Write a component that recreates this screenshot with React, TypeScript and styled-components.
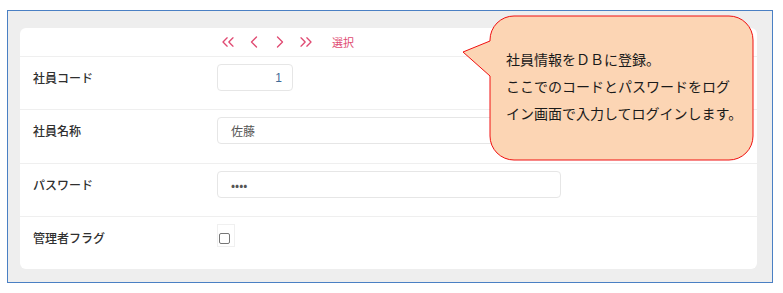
import React from 'react'
import styled, { createGlobalStyle } from 'styled-components'
import { ChevronsLeft, ChevronLeft, ChevronRight, ChevronsRight } from 'lucide-react'

const Global = createGlobalStyle`
body {
  margin: 0;
  background: #fff;
  font-family: "Noto Sans CJK JP", "Noto Sans", sans-serif;
}
`

const Page = styled.div`
position: relative;
width: 783px;
height: 293px;
padding: 10px 0 0 7px;
box-sizing: border-box;
`

const Frame = styled.div`
width: 766px;
height: 273px;
box-sizing: border-box;
border: 1px solid #4a80c4;
background: #eeeeee;
padding: 17px 15px 13px 12px;
`

const Card = styled.div`
background: #fff;
border-radius: 6px;
height: 100%;
display: flex;
flex-direction: column;
`

const Nav = styled.div`
height: 29px;
flex-shrink: 0;
box-sizing: border-box;
border-bottom: 1px solid #efefef;
display: flex;
align-items: center;
padding-left: 198px;
gap: 6px;
color: #e04a72;
`

const NavText = styled.span`
font-size: 11px;
margin-left: 10px;
`

const Row = styled.div<{ $h: number; $last?: boolean }>`
height: ${p => p.$h}px;
flex-shrink: 0;
box-sizing: border-box;
border-bottom: ${p => (p.$last ? 'none' : '1px solid #efefef')};
display: flex;
align-items: flex-start;
padding: 7px 0 0 13px;
`

const Label = styled.div`
width: 184px;
height: 27px;
display: flex;
align-items: center;
font-size: 12px;
font-weight: 500;
color: #2f2f2f;
`

const Input = styled.div<{ $w: number; $right?: boolean }>`
width: ${p => p.$w}px;
height: 27px;
box-sizing: border-box;
border: 1px solid #e6e6e6;
border-radius: 4px;
display: flex;
align-items: center;
justify-content: ${p => (p.$right ? 'flex-end' : 'flex-start')};
padding: 0 10px 0 13px;
font-size: 12px;
color: #555;
`

const Num = styled.span`
color: #3f6a96;
font-family: "Liberation Sans", sans-serif;
`

const CheckWrap = styled.div`
width: 18px;
height: 23px;
box-sizing: border-box;
border: 1px solid #f0f0f0;
display: flex;
align-items: flex-end;
padding: 0 0 2px 1px;
`

const Check = styled.span`
width: 11px;
height: 11px;
box-sizing: border-box;
border: 1px solid #767676;
border-radius: 2px;
background: #fff;
`

const Bubble = styled.div`
position: absolute;
left: 460px;
top: 13px;
width: 296px;
height: 150px;
`

const BubbleText = styled.div`
position: absolute;
left: 46px;
top: 33px;
font-size: 14px;
line-height: 27px;
color: #1a1a1a;
white-space: nowrap;
`

const fields = [
  { label: '社員名称', value: '佐藤', w: 420, h: 54 },
  { label: 'パスワード', value: '••••', w: 344, h: 53 },
]

const App: React.FC = () => {
  return (
    <Page>
      <Global />
      <Frame>
        <Card>
          <Nav>
            <ChevronsLeft size={20} strokeWidth={1.6} />
            <ChevronLeft size={20} strokeWidth={1.6} />
            <ChevronRight size={20} strokeWidth={1.6} />
            <ChevronsRight size={20} strokeWidth={1.6} />
            <NavText>選択</NavText>
          </Nav>
          <Row $h={53}>
            <Label>社員コード</Label>
            <Input $w={76} $right><Num>1</Num></Input>
          </Row>
          {fields.map(f => (
            <Row key={f.label} $h={f.h}>
              <Label>{f.label}</Label>
              <Input $w={f.w}>{f.value}</Input>
            </Row>
          ))}
          <Row $h={52} $last>
            <Label>管理者フラグ</Label>
            <CheckWrap><Check /></CheckWrap>
          </Row>
        </Card>
      </Frame>
      <Bubble>
        <svg width="296" height="150" viewBox="0 0 296 150">
          <path
            d="M54 3 H269 A24 24 0 0 1 293 27 V123 A24 24 0 0 1 269 147 H54 A24 24 0 0 1 30 123 V63 L3 39 L30 28 V27 A24 24 0 0 1 54 3 Z"
            fill="#fcd5b4"
            stroke="#f01010"
            strokeWidth="1"
          />
        </svg>
        <BubbleText>
          社員情報をＤＢに登録。<br />
          ここでのコードとパスワードをログ<br />
          イン画面で入力してログインします。
        </BubbleText>
      </Bubble>
    </Page>
  )
}

export default App
